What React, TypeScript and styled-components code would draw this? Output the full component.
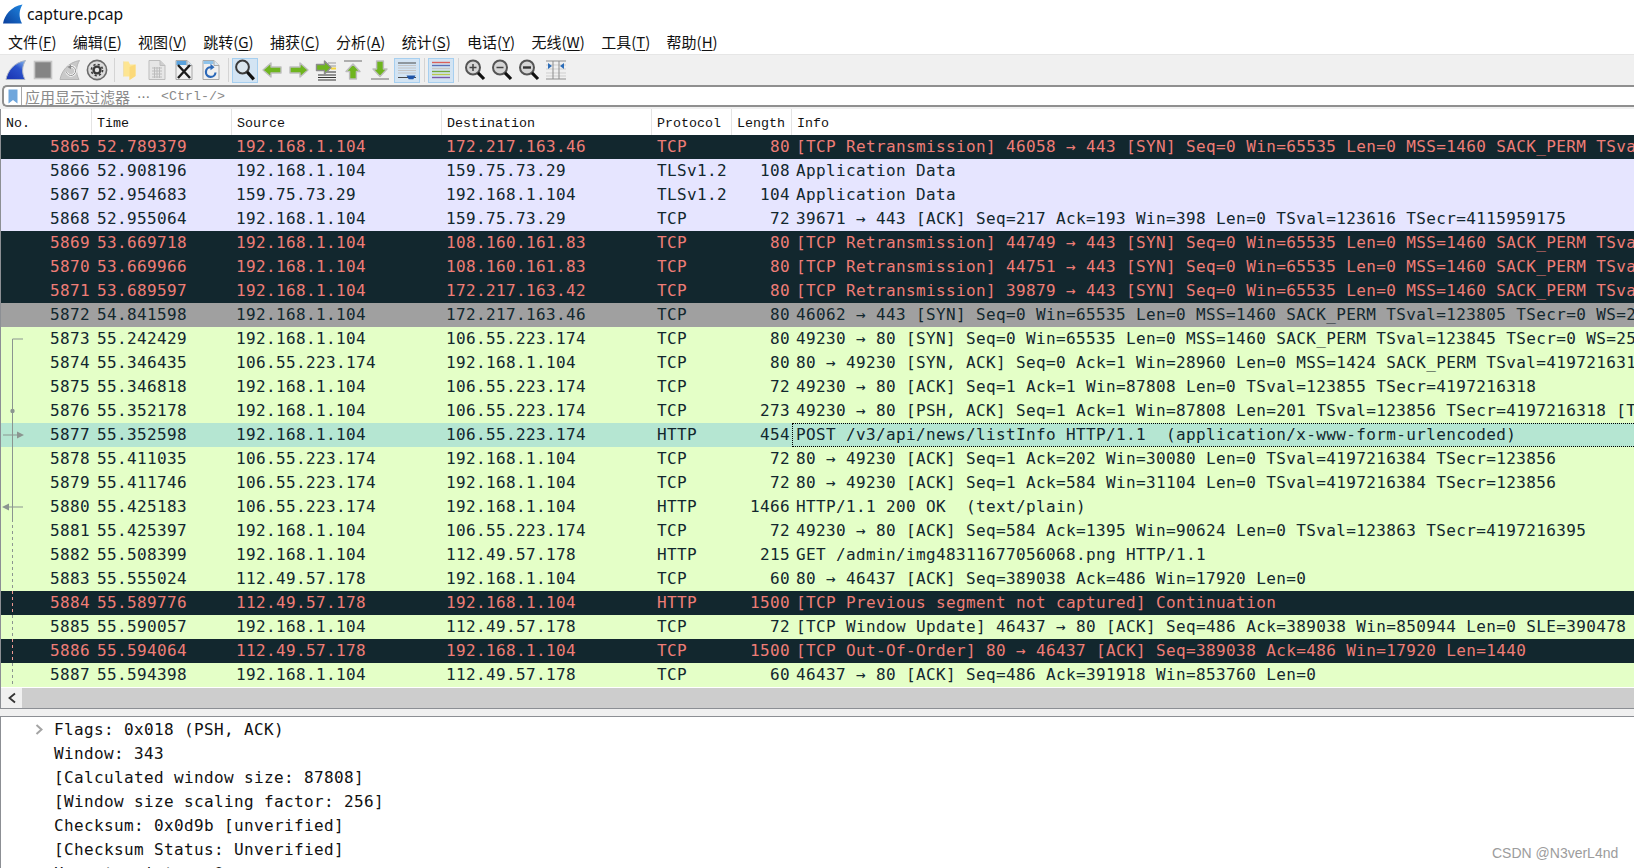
import React from "react";
import styled, { createGlobalStyle } from "styled-components";

const Global = createGlobalStyle`
  html, body { margin: 0; padding: 0; background: #fff; height: 868px; overflow: hidden; }
  #root { height: 868px; }
`;

const MONO = `"DejaVu Sans Mono", "Liberation Mono", monospace`;
const CJK = `"Noto Sans CJK SC", "Noto Sans", sans-serif`;
const HEAD = `"Liberation Mono", "Noto Sans CJK SC", monospace`;

type Tone = "bad" | "lav" | "green" | "grey" | "sel";
type Flow = "none" | "start" | "line" | "dot" | "right" | "left" | "dash";

const toneBg: Record<Tone, string> = { bad: "#12272e", lav: "#e6e5ff", green: "#e4ffc7", grey: "#a0a0a0", sel: "#b5e6d2" };
const toneFg: Record<Tone, string> = { bad: "#ee7d77", lav: "#12272e", green: "#12272e", grey: "#12272e", sel: "#12272e" };

const Page = styled.div`
  width: 1634px; height: 868px; overflow: hidden; display: flex; flex-direction: column; background: #fff; position: relative;
`;
const TitleBar = styled.div`
  height: 28px; display: flex; align-items: center; gap: 2px; padding-left: 1px; flex: none;
  svg { display: block; }
`;
const TitleText = styled.span`
  font: 15.7px/28px "Noto Sans", "Open Sans", sans-serif; color: #111;
`;
const MenuBar = styled.div`
  height: 24px; padding-top: 2px; display: flex; align-items: center; flex: none; padding-left: 8px; gap: 16.3px;
`;
const MenuItem = styled.span`
  font: 15px/24px ${CJK}; color: #111; white-space: nowrap; u { text-underline-offset: 2px; }
`;
const Toolbar = styled.div`
  height: 30px; flex: none; display: flex; align-items: center; background: #f0f0f0; border-top: 1px solid #e6e6e6; padding-left: 3px;
`;
const ToolButton = styled.div<{ $on?: boolean }>`
  width: 26px; height: 25px; margin-right: 1px; display: flex; align-items: center; justify-content: center; flex: none; box-sizing: border-box;
  background: ${(p) => (p.$on ? "#d3e4f3" : "transparent")};
  outline: ${(p) => (p.$on ? "1px solid #a6cff0" : "none")}; outline-offset: -1px;
`;
const ToolSep = styled.div<{ $w: number }>`
  width: ${(p) => p.$w}px; height: 24px; flex: none; display: flex; justify-content: center;
  &::before { content: ""; width: 1px; background: #d4d4d4; }
`;
const FilterWrap = styled.div`
  height: 22px; flex: none; background: #f0f0f0; padding-left: 2px; padding-bottom: 2px;
`;
const FilterBox = styled.div`
  height: 18px; background: #fff; border: 2px solid #8f8f8f; border-right: 0; border-radius: 5px 0 0 5px; display: flex; align-items: center; overflow: hidden;
`;
const BookmarkSlot = styled.div`
  width: 17px; height: 18px; flex: none; border-right: 1px solid #a8a8a8; display: flex; justify-content: center; align-items: center;
`;
const Placeholder = styled.span`
  font: 15px/18px ${CJK}; color: #8a8a8a; margin: 1px 0 0 3px; white-space: pre;
`;
const PlaceholderMono = styled.span`
  font: 13.33px/18px ${HEAD}; color: #8a8a8a; margin: 2px 0 0 10px;
`;
const Dots = styled.span`
  font: 13px/18px ${CJK}; color: #777; margin: 1px 0 0 7px; letter-spacing: 1px;
`;
const Table = styled.div`
  flex: none; border-left: 1px solid #8c8f94; display: flex; flex-direction: column;
`;
const columns = "91px 140px 210px 210px 80px 60px 1fr";
const Header = styled.div`
  height: 26px; display: grid; grid-template-columns: ${columns}; background: #fff;
`;
const HeadCell = styled.div<{ $last?: boolean }>`
  font: 13.33px/29px ${HEAD}; color: #111; padding-left: 5px; border-right: ${(p) => (p.$last ? "0" : "1px solid #e4e4e4")}; white-space: nowrap;
`;
const Row = styled.div<{ $tone: Tone }>`
  height: 24px; display: grid; grid-template-columns: ${columns}; background: ${(p) => toneBg[p.$tone]}; color: ${(p) => toneFg[p.$tone]};
  font: 16px/24px ${MONO}; letter-spacing: 0.37px; white-space: pre;
`;
const NoCell = styled.div`
  display: flex; justify-content: space-between; padding-right: 2px; svg { display: block; flex: none; }
`;
const Cell = styled.div<{ $pad: number }>`
  padding-left: ${(p) => p.$pad}px; overflow: hidden;
`;
const LenCell = styled.div`
  text-align: right; padding-right: 2px;
`;
const InfoCell = styled.div<{ $focus?: boolean }>`
  padding-left: ${(p) => (p.$focus ? 3 : 4)}px; overflow: hidden;
  border: ${(p) => (p.$focus ? "1px dotted #000" : "0")}; border-right: 0;
  line-height: ${(p) => (p.$focus ? 22 : 24)}px;
`;
const HScroll = styled.div`
  height: 20px; margin-top: 1px; display: flex; background: #cdcdcd;
`;
const ScrollBtn = styled.div`
  width: 21px; background: #f0f0f0; display: flex; align-items: center; justify-content: center; flex: none;
`;
const Splitter = styled.div`
  height: 7px; flex: none; background: #f0f0f0; border-top: 1px solid #8c8f94;
`;
const Details = styled.div`
  flex: 1; min-height: 0; overflow: hidden; border-top: 1px solid #8c8f94; border-left: 1px solid #8c8f94; padding: 1px 0 0 53px;
  font: 16px/24px ${MONO}; letter-spacing: 0.37px; color: #111; white-space: pre;
`;
const DetailRow = styled.div`
  height: 24px; position: relative;
`;
const Expander = styled.svg`
  position: absolute; left: -19px; top: 6px;
`;
const Watermark = styled.div`
  position: absolute; left: 1492px; top: 844px; font: 14px/18px "Liberation Sans", Arial, sans-serif; color: #9c9c9c; white-space: nowrap;
`;

const fin = "M2 21.5C3.5 13 10 4.5 21.5 2.5C18 8 17.5 15 21 21.5Z";

const Svg: React.FC<{ children: React.ReactNode; size?: number }> = ({ children, size = 24 }) => (
  <svg width={size} height={size} viewBox="0 0 24 24" fill="none">{children}</svg>
);

const TitleFin = () => (
  <Svg>
    <defs>
      <linearGradient id="tf" x1="0" y1="1" x2="1" y2="0">
        <stop offset="0" stopColor="#0b3f9c" />
        <stop offset="1" stopColor="#1f86e0" />
      </linearGradient>
    </defs>
    <path d={fin} fill="url(#tf)" />
  </Svg>
);
const FinIcon = () => (
  <Svg>
    <defs>
      <linearGradient id="bf" x1="0.2" y1="1" x2="0.9" y2="0">
        <stop offset="0" stopColor="#1b36b4" />
        <stop offset="0.6" stopColor="#2a52cc" />
        <stop offset="1" stopColor="#7fb0ea" />
      </linearGradient>
    </defs>
    <path d={fin} fill="url(#bf)" stroke="#a9b2c4" strokeWidth="1" />
  </Svg>
);
const StopIcon = () => (
  <Svg>
    <rect x="3.5" y="3.5" width="17" height="17" fill="#858585" stroke="#c6c6c6" strokeWidth="1.6" />
  </Svg>
);
const RestartIcon = () => (
  <Svg>
    <path d={fin} fill="#c9c9c9" stroke="#b5b5b5" strokeWidth="1" />
    <path d="M8.5 14a4.6 4.6 0 1 0 2-5" stroke="#fff" strokeWidth="2.4" />
    <path d="M8.5 14a4.6 4.6 0 1 0 2-5" stroke="#8d8d8d" strokeWidth="1" />
    <path d="M13 6.5l-3.5 2.6 3.5 2.2z" fill="#8d8d8d" />
  </Svg>
);
const GearIcon = () => (
  <Svg>
    <circle cx="12" cy="12" r="9.6" fill="#dcdcdc" stroke="#6a6a6a" strokeWidth="1.6" />
    <circle cx="12" cy="12" r="5.6" stroke="#3a3a3a" strokeWidth="1.6" strokeDasharray="2.2 2.2" />
    <circle cx="12" cy="12" r="4.6" fill="#3a3a3a" />
    <circle cx="12" cy="12" r="2.2" fill="#e4e4e4" />
  </Svg>
);
const FolderIcon = () => (
  <Svg>
    <path d="M5.5 3.5h5l1.5 3h5.5v11.5l-6 4v-3.5h-6z" fill="#fde592" />
    <path d="M11.5 22V9l6-2.5V18z" fill="#fbd97a" />
    <path d="M5.5 3.5v15" stroke="#efe0b0" strokeWidth="1" />
  </Svg>
);
const GridDoc = () => (
  <Svg>
    <path d="M4 2.5h11l5 5v14H4z" fill="#e6e6e6" stroke="#bdbdbd" />
    <path d="M15 2.5v5h5" fill="#cfcfcf" stroke="#bdbdbd" />
    <path d="M7 10h10M7 13h10M7 16h10M7 19h10M9.5 9v11M12 9v11M14.5 9v11" stroke="#bcbcbc" strokeWidth="1" />
  </Svg>
);
const CloseDoc = () => (
  <Svg>
    <path d="M4 2.5h11l5 5v14H4z" fill="#f0f0f0" stroke="#a8a8a8" />
    <path d="M4.5 3h10v4H4.5z" fill="#5aa2dc" />
    <path d="M15 2.5v5h5" fill="#d8e8f4" stroke="#a8a8a8" />
    <path d="M6 7l12 13M18 7L6 20" stroke="#1c1c1c" strokeWidth="2.4" />
  </Svg>
);
const ReloadDoc = () => (
  <Svg>
    <path d="M4 2.5h11l5 5v14H4z" fill="#f0f0f0" stroke="#a8a8a8" />
    <path d="M4.5 3h10v3H4.5z" fill="#8fc3ea" />
    <path d="M15 2.5v5h5" fill="#d8e8f4" stroke="#a8a8a8" />
    <path d="M16.5 14.5a4.8 4.8 0 1 1-4.4-5.2" stroke="#2b68b8" strokeWidth="2.2" />
    <path d="M11.5 5.8l4 3.4-4 3z" fill="#2b68b8" />
  </Svg>
);
const SearchIcon = () => (
  <Svg>
    <circle cx="9.5" cy="9" r="6.4" fill="#dbe6ee" stroke="#3b3b3b" strokeWidth="2" />
    <path d="M14.2 14l6.6 7.4" stroke="#111" strokeWidth="3.2" />
  </Svg>
);
const greenArrow = { fill: "#6fb51f", stroke: "#bdbdbd", strokeWidth: 1.4, strokeLinejoin: "round" as const };
const BackIcon = () => (
  <Svg><path d="M3 12l8-7v4h10v6H11v4z" {...greenArrow} /></Svg>
);
const ForwardIcon = () => (
  <Svg><path d="M21 12l-8-7v4H3v6h10v4z" {...greenArrow} /></Svg>
);
const GotoIcon = () => (
  <Svg>
    <path d="M12 14h10M4 17h18M4 19.5h18M4 22h18" stroke="#333" strokeWidth="1.1" />
    <path d="M14 5h8M16 8h6" stroke="#999" strokeWidth="1" />
    <path d="M17 10.5h5" stroke="#f2d53c" strokeWidth="2" />
    <path d="M17 9.5l-6.5-6.5v3.5H2.5v6h8V16z" {...greenArrow} stroke="#8d8d8d" />
  </Svg>
);
const UpIcon = () => (
  <Svg>
    <path d="M3 3h18" stroke="#aeaeae" strokeWidth="2" />
    <path d="M12 6l7 7.5h-3.6V21H8.6v-7.5H5z" {...greenArrow} />
  </Svg>
);
const DownIcon = () => (
  <Svg>
    <path d="M3 21h18" stroke="#aeaeae" strokeWidth="2" />
    <path d="M12 18.5l7-7.5h-3.6V3H8.6v8H5z" {...greenArrow} />
  </Svg>
);
const AutoScrollIcon = () => (
  <Svg>
    <path d="M3 5h18M3 19.5h18" stroke="#4a4a4a" strokeWidth="1.2" />
    <path d="M3 7.5h18M3 10h18M3 12.5h18M3 15h18" stroke="#c4c4c4" strokeWidth="1" />
    <path d="M11.5 17.5h9l-2.2 3.8h-4.6z" fill="#1f55a8" />
  </Svg>
);
const ColorizeIcon = () => (
  <Svg>
    <path d="M3 4.5h18" stroke="#d9605a" strokeWidth="1.4" />
    <path d="M3 7.5h18" stroke="#5a6fb5" strokeWidth="1.4" />
    <path d="M3 10.5h18" stroke="#c7c7c7" strokeWidth="1.4" />
    <path d="M3 13.5h18" stroke="#74a83c" strokeWidth="1.4" />
    <path d="M3 16.5h18" stroke="#b9c94f" strokeWidth="1.4" />
    <path d="M3 19.5h18" stroke="#7a5aa8" strokeWidth="1.4" />
  </Svg>
);
const ZoomIcon: React.FC<{ mark: "in" | "out" | "fit" }> = ({ mark }) => (
  <Svg>
    <circle cx="10" cy="9.5" r="7" fill="#d6d6d6" stroke="#555" strokeWidth="2" />
    <path d="M15 14.8l6 6.2" stroke="#111" strokeWidth="3.2" />
    {mark === "in" && <path d="M6.5 9.5h7M10 6v7" stroke="#444" strokeWidth="1.5" />}
    {mark === "out" && <path d="M6.5 9.5h7" stroke="#444" strokeWidth="1.5" />}
    {mark === "fit" && <path d="M6 9.5h8" stroke="#333" strokeWidth="2.4" />}
  </Svg>
);
const ResizeIcon = () => (
  <Svg>
    <path d="M2 3h20M2 21h20" stroke="#8d8d8d" strokeWidth="1.2" />
    <path d="M2 7h20M2 11h20M2 15h20M2 18h20" stroke="#cfcfcf" strokeWidth="1" />
    <path d="M9 3v18M15 3v18" stroke="#8d8d8d" strokeWidth="1" />
    <path d="M4 5v6l4-3zM20 5v6l-4-3z" fill="#2d6db8" />
  </Svg>
);
const BookmarkIcon = () => (
  <svg width="10" height="15" viewBox="0 0 10 15">
    <path d="M0.5 0.5h9v14L5 11l-4.5 3.5z" fill="#6fa6dc" />
  </svg>
);
const ScrollChevron = () => (
  <svg width="10" height="12" viewBox="0 0 10 12" fill="none">
    <path d="M8 1.5L2.5 6 8 10.5" stroke="#333" strokeWidth="1.8" />
  </svg>
);

const FlowGlyph: React.FC<{ flow: Flow; color: string }> = ({ flow, color }) => {
  if (flow === "none") return <svg width="24" height="24" />;
  return (
    <svg width="24" height="24" viewBox="0 0 24 24" fill="none" stroke={color} strokeWidth="1">
      {flow === "start" && <path d="M11.5 12V24M11.5 12H22" />}
      {flow === "line" && <path d="M11.5 0V24" />}
      {flow === "dot" && (
        <>
          <path d="M11.5 0V24" />
          <circle cx="11.5" cy="12" r="2.2" fill={color} stroke="none" />
        </>
      )}
      {flow === "right" && (
        <>
          <path d="M11.5 0V24M2 12H17" />
          <path d="M16 8.5L23 12l-7 3.5z" fill={color} stroke="none" />
        </>
      )}
      {flow === "left" && (
        <>
          <path d="M11.5 0V24M8 12H22" />
          <path d="M8 8.5L1 12l7 3.5z" fill={color} stroke="none" />
        </>
      )}
      {flow === "dash" && <path d="M11.5 0V24" strokeDasharray="3 3" />}
    </svg>
  );
};

interface Packet { no: number; time: string; src: string; dst: string; proto: string; len: number; info: string; tone: Tone; flow: Flow }
const H = "192.168.1.104";
const SYN_TAIL = "[SYN] Seq=0 Win=65535 Len=0 MSS=1460 SACK_PERM TSval";
const packets: Packet[] = [
  { no: 5865, time: "52.789379", src: H, dst: "172.217.163.46", proto: "TCP", len: 80, info: `[TCP Retransmission] 46058 → 443 ${SYN_TAIL}`, tone: "bad", flow: "none" },
  { no: 5866, time: "52.908196", src: H, dst: "159.75.73.29", proto: "TLSv1.2", len: 108, info: "Application Data", tone: "lav", flow: "none" },
  { no: 5867, time: "52.954683", src: "159.75.73.29", dst: H, proto: "TLSv1.2", len: 104, info: "Application Data", tone: "lav", flow: "none" },
  { no: 5868, time: "52.955064", src: H, dst: "159.75.73.29", proto: "TCP", len: 72, info: "39671 → 443 [ACK] Seq=217 Ack=193 Win=398 Len=0 TSval=123616 TSecr=4115959175", tone: "lav", flow: "none" },
  { no: 5869, time: "53.669718", src: H, dst: "108.160.161.83", proto: "TCP", len: 80, info: `[TCP Retransmission] 44749 → 443 ${SYN_TAIL}`, tone: "bad", flow: "none" },
  { no: 5870, time: "53.669966", src: H, dst: "108.160.161.83", proto: "TCP", len: 80, info: `[TCP Retransmission] 44751 → 443 ${SYN_TAIL}`, tone: "bad", flow: "none" },
  { no: 5871, time: "53.689597", src: H, dst: "172.217.163.42", proto: "TCP", len: 80, info: `[TCP Retransmission] 39879 → 443 ${SYN_TAIL}`, tone: "bad", flow: "none" },
  { no: 5872, time: "54.841598", src: H, dst: "172.217.163.46", proto: "TCP", len: 80, info: "46062 → 443 [SYN] Seq=0 Win=65535 Len=0 MSS=1460 SACK_PERM TSval=123805 TSecr=0 WS=2", tone: "grey", flow: "none" },
  { no: 5873, time: "55.242429", src: H, dst: "106.55.223.174", proto: "TCP", len: 80, info: "49230 → 80 [SYN] Seq=0 Win=65535 Len=0 MSS=1460 SACK_PERM TSval=123845 TSecr=0 WS=25", tone: "green", flow: "start" },
  { no: 5874, time: "55.346435", src: "106.55.223.174", dst: H, proto: "TCP", len: 80, info: "80 → 49230 [SYN, ACK] Seq=0 Ack=1 Win=28960 Len=0 MSS=1424 SACK_PERM TSval=419721631", tone: "green", flow: "line" },
  { no: 5875, time: "55.346818", src: H, dst: "106.55.223.174", proto: "TCP", len: 72, info: "49230 → 80 [ACK] Seq=1 Ack=1 Win=87808 Len=0 TSval=123855 TSecr=4197216318", tone: "green", flow: "line" },
  { no: 5876, time: "55.352178", src: H, dst: "106.55.223.174", proto: "TCP", len: 273, info: "49230 → 80 [PSH, ACK] Seq=1 Ack=1 Win=87808 Len=201 TSval=123856 TSecr=4197216318 [T", tone: "green", flow: "dot" },
  { no: 5877, time: "55.352598", src: H, dst: "106.55.223.174", proto: "HTTP", len: 454, info: "POST /v3/api/news/listInfo HTTP/1.1  (application/x-www-form-urlencoded)", tone: "sel", flow: "right" },
  { no: 5878, time: "55.411035", src: "106.55.223.174", dst: H, proto: "TCP", len: 72, info: "80 → 49230 [ACK] Seq=1 Ack=202 Win=30080 Len=0 TSval=4197216384 TSecr=123856", tone: "green", flow: "line" },
  { no: 5879, time: "55.411746", src: "106.55.223.174", dst: H, proto: "TCP", len: 72, info: "80 → 49230 [ACK] Seq=1 Ack=584 Win=31104 Len=0 TSval=4197216384 TSecr=123856", tone: "green", flow: "line" },
  { no: 5880, time: "55.425183", src: "106.55.223.174", dst: H, proto: "HTTP", len: 1466, info: "HTTP/1.1 200 OK  (text/plain)", tone: "green", flow: "left" },
  { no: 5881, time: "55.425397", src: H, dst: "106.55.223.174", proto: "TCP", len: 72, info: "49230 → 80 [ACK] Seq=584 Ack=1395 Win=90624 Len=0 TSval=123863 TSecr=4197216395", tone: "green", flow: "dash" },
  { no: 5882, time: "55.508399", src: H, dst: "112.49.57.178", proto: "HTTP", len: 215, info: "GET /admin/img48311677056068.png HTTP/1.1", tone: "green", flow: "dash" },
  { no: 5883, time: "55.555024", src: "112.49.57.178", dst: H, proto: "TCP", len: 60, info: "80 → 46437 [ACK] Seq=389038 Ack=486 Win=17920 Len=0", tone: "green", flow: "dash" },
  { no: 5884, time: "55.589776", src: "112.49.57.178", dst: H, proto: "HTTP", len: 1500, info: "[TCP Previous segment not captured] Continuation", tone: "bad", flow: "dash" },
  { no: 5885, time: "55.590057", src: H, dst: "112.49.57.178", proto: "TCP", len: 72, info: "[TCP Window Update] 46437 → 80 [ACK] Seq=486 Ack=389038 Win=850944 Len=0 SLE=390478", tone: "green", flow: "dash" },
  { no: 5886, time: "55.594064", src: "112.49.57.178", dst: H, proto: "TCP", len: 1500, info: "[TCP Out-Of-Order] 80 → 46437 [ACK] Seq=389038 Ack=486 Win=17920 Len=1440", tone: "bad", flow: "dash" },
  { no: 5887, time: "55.594398", src: H, dst: "112.49.57.178", proto: "TCP", len: 60, info: "46437 → 80 [ACK] Seq=486 Ack=391918 Win=853760 Len=0", tone: "green", flow: "dash" },
];

const menus: [string, string][] = [["文件", "F"], ["编辑", "E"], ["视图", "V"], ["跳转", "G"], ["捕获", "C"], ["分析", "A"], ["统计", "S"], ["电话", "Y"], ["无线", "W"], ["工具", "T"], ["帮助", "H"]];
const headers = ["No.", "Time", "Source", "Destination", "Protocol", "Length", "Info"];
const details = [
  "Flags: 0x018 (PSH, ACK)",
  "Window: 343",
  "[Calculated window size: 87808]",
  "[Window size scaling factor: 256]",
  "Checksum: 0x0d9b [unverified]",
  "[Checksum Status: Unverified]",
  "Urgent pointer: 0",
];

export default function App() {
  return (
    <Page>
      <Global />
      <TitleBar>
        <TitleFin />
        <TitleText>capture.pcap</TitleText>
      </TitleBar>
      <MenuBar>
        {menus.map(([label, key]) => (
          <MenuItem key={key}>{label}(<u>{key}</u>)</MenuItem>
        ))}
      </MenuBar>
      <Toolbar>
        <ToolButton><FinIcon /></ToolButton>
        <ToolButton><StopIcon /></ToolButton>
        <ToolButton><RestartIcon /></ToolButton>
        <ToolButton><GearIcon /></ToolButton>
        <ToolSep $w={6} />
        <ToolButton><FolderIcon /></ToolButton>
        <ToolButton><GridDoc /></ToolButton>
        <ToolButton><CloseDoc /></ToolButton>
        <ToolButton><ReloadDoc /></ToolButton>
        <ToolSep $w={7} />
        <ToolButton $on><SearchIcon /></ToolButton>
        <ToolButton><BackIcon /></ToolButton>
        <ToolButton><ForwardIcon /></ToolButton>
        <ToolButton><GotoIcon /></ToolButton>
        <ToolButton><UpIcon /></ToolButton>
        <ToolButton><DownIcon /></ToolButton>
        <ToolButton $on><AutoScrollIcon /></ToolButton>
        <ToolSep $w={7} />
        <ToolButton $on><ColorizeIcon /></ToolButton>
        <ToolSep $w={7} />
        <ToolButton><ZoomIcon mark="in" /></ToolButton>
        <ToolButton><ZoomIcon mark="out" /></ToolButton>
        <ToolButton><ZoomIcon mark="fit" /></ToolButton>
        <ToolButton><ResizeIcon /></ToolButton>
      </Toolbar>
      <FilterWrap>
        <FilterBox>
          <BookmarkSlot><BookmarkIcon /></BookmarkSlot>
          <Placeholder>应用显示过滤器</Placeholder>
          <Dots>⋯</Dots>
          <PlaceholderMono>&lt;Ctrl-/&gt;</PlaceholderMono>
        </FilterBox>
      </FilterWrap>
      <Table>
        <Header>
          {headers.map((h, i) => (
            <HeadCell key={h} $last={i === headers.length - 1}>{h}</HeadCell>
          ))}
        </Header>
        {packets.map((p) => (
          <Row key={p.no} $tone={p.tone}>
            <NoCell>
              <FlowGlyph flow={p.flow} color={p.tone === "bad" ? "#ee9a94" : "#8b9590"} />
              <span>{p.no}</span>
            </NoCell>
            <Cell $pad={5}>{p.time}</Cell>
            <Cell $pad={4}>{p.src}</Cell>
            <Cell $pad={4}>{p.dst}</Cell>
            <Cell $pad={5}>{p.proto}</Cell>
            <LenCell>{p.len}</LenCell>
            <InfoCell $focus={p.tone === "sel"}>{p.info}</InfoCell>
          </Row>
        ))}
        <HScroll>
          <ScrollBtn><ScrollChevron /></ScrollBtn>
        </HScroll>
      </Table>
      <Splitter />
      <Details>
        {details.map((d, i) => (
          <DetailRow key={d}>
            {i === 0 && (
              <Expander width="9" height="11" viewBox="0 0 9 11" fill="none">
                <path d="M1.5 1l5 4.5-5 4.5" stroke="#a4a4a4" strokeWidth="2" />
              </Expander>
            )}
            {d}
          </DetailRow>
        ))}
      </Details>
      <Watermark>CSDN @N3verL4nd</Watermark>
    </Page>
  );
}
